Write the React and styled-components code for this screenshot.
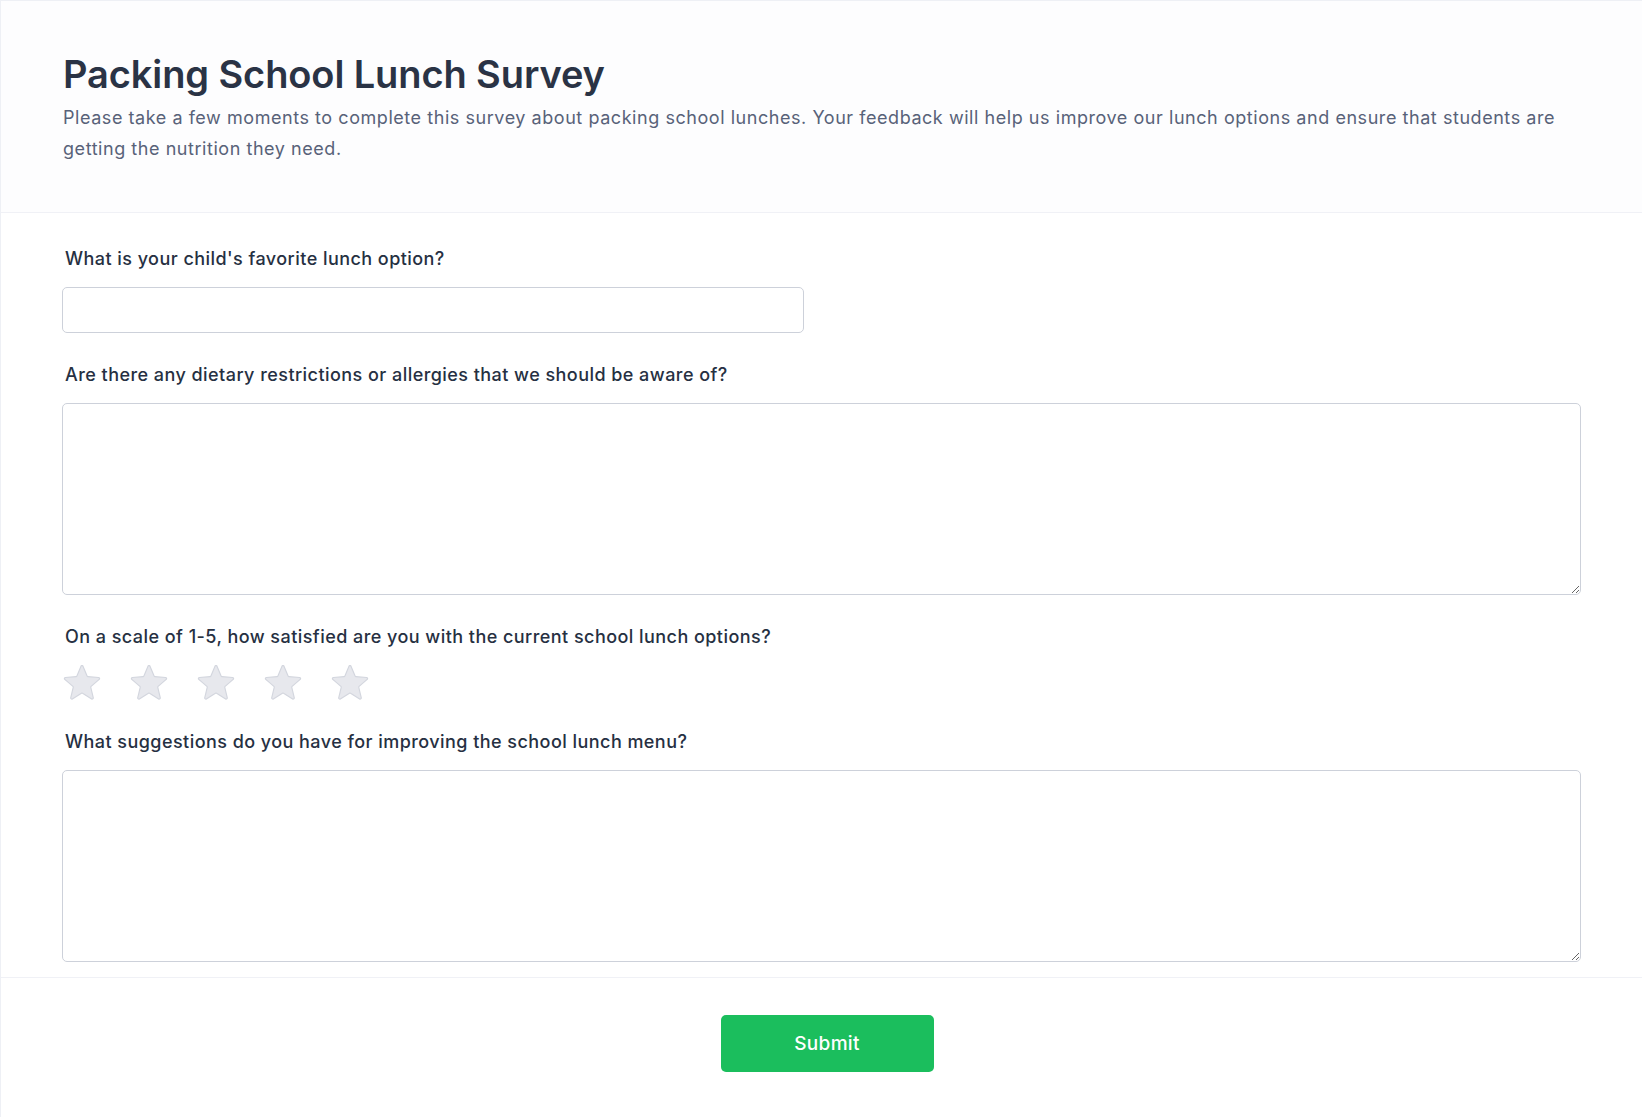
import React, { useState } from "react";
import styled, { createGlobalStyle } from "styled-components";

const GlobalStyle = createGlobalStyle`
  * {
    box-sizing: border-box;
  }
  body {
    margin: 0;
    background: #ffffff;
    font-family: Inter, "Noto Sans", "Liberation Sans", sans-serif;
    -webkit-font-smoothing: antialiased;
  }
`;

const Card = styled.div`
  display: flex;
  flex-direction: column;
  min-height: 1117px;
  background: #ffffff;
  border-left: 1px solid #eef0f5;
  border-top: 1px solid #eef0f5;
`;

const Header = styled.header`
  display: flex;
  flex-direction: column;
  gap: 8px;
  padding: 53px 61px 48px 62px;
  background: #fdfdfe;
  border-bottom: 1px solid #f0f1f6;
`;

const Title = styled.h1`
  margin: 0;
  font-size: 38px;
  line-height: 40px;
  font-weight: 600;
  color: #2a3345;
  letter-spacing: -0.1px;
`;

const Description = styled.p`
  margin: 0;
  font-size: 18px;
  line-height: 31px;
  font-weight: 400;
  letter-spacing: 0.55px;
  color: #586279;
`;

const Form = styled.form`
  display: flex;
  flex-direction: column;
  gap: 28px;
  padding: 32px 61px 15px 61px;
  border-bottom: 1px solid #f0f1f6;
`;

const Field = styled.div`
  display: flex;
  flex-direction: column;
  gap: 14px;
`;

const Label = styled.label`
  padding-left: 3px;
  font-size: 18px;
  line-height: 28px;
  font-weight: 450;
  letter-spacing: 0.45px;
  color: #263042;
`;

const TextInput = styled.input`
  width: 742px;
  height: 46px;
  padding: 0 14px;
  border: 1px solid #cdd1da;
  border-radius: 5px;
  font: inherit;
  font-size: 18px;
  color: #263042;
  outline: none;
`;

const TextArea = styled.textarea`
  width: 100%;
  height: 192px;
  padding: 12px 14px;
  border: 1px solid #cdd1da;
  border-radius: 5px;
  font: inherit;
  font-size: 18px;
  color: #263042;
  outline: none;
`;

const Stars = styled.div`
  display: flex;
  gap: 29px;
  padding-left: 1px;
`;

const StarButton = styled.button`
  display: flex;
  padding: 0;
  border: none;
  background: none;
  cursor: pointer;

  svg path {
    fill: ${(p) => (p.$active ? "#facc15" : "#e7e8ed")};
    stroke: ${(p) => (p.$active ? "#eab308" : "#d3d6de")};
  }
`;

const Footer = styled.footer`
  display: flex;
  justify-content: center;
  padding: 37px 0 45px 11px;
`;

const SubmitButton = styled.button`
  width: 213px;
  height: 57px;
  border: none;
  border-radius: 5px;
  background: #1bbe5d;
  color: #ffffff;
  font-family: inherit;
  font-size: 19px;
  font-weight: 500;
  letter-spacing: 0.3px;
  cursor: pointer;
`;

function Star() {
  return (
    <svg width="38" height="35" viewBox="2.1 2.9 19.8 18.2" strokeWidth="0.6">
      <path d="M11.48 3.499a.562.562 0 0 1 1.04 0l2.125 5.111a.563.563 0 0 0 .475.345l5.518.442c.499.04.701.663.321.988l-4.204 3.602a.563.563 0 0 0-.182.557l1.285 5.385a.562.562 0 0 1-.84.61l-4.725-2.885a.562.562 0 0 0-.586 0L6.982 20.54a.562.562 0 0 1-.84-.61l1.285-5.386a.562.562 0 0 0-.182-.557l-4.204-3.602a.562.562 0 0 1 .321-.988l5.518-.442a.563.563 0 0 0 .475-.345L11.48 3.5Z" />
    </svg>
  );
}

function App() {
  const [rating, setRating] = useState(0);

  return (
    <>
      <GlobalStyle />
      <Card>
        <Header>
          <Title>Packing School Lunch Survey</Title>
          <Description>
            Please take a few moments to complete this survey about packing
            school lunches. Your feedback will help us improve our lunch options
            and ensure that students are getting the nutrition they need.
          </Description>
        </Header>
        <Form onSubmit={(e) => e.preventDefault()}>
          <Field>
            <Label htmlFor="favorite">
              What is your child's favorite lunch option?
            </Label>
            <TextInput id="favorite" type="text" />
          </Field>
          <Field>
            <Label htmlFor="restrictions">
              Are there any dietary restrictions or allergies that we should be
              aware of?
            </Label>
            <TextArea id="restrictions" />
          </Field>
          <Field>
            <Label>
              On a scale of 1-5, how satisfied are you with the current school
              lunch options?
            </Label>
            <Stars>
              {[1, 2, 3, 4, 5].map((n) => (
                <StarButton
                  key={n}
                  type="button"
                  $active={n <= rating}
                  onClick={() => setRating(n)}
                  aria-label={`${n} star`}
                >
                  <Star />
                </StarButton>
              ))}
            </Stars>
          </Field>
          <Field>
            <Label htmlFor="suggestions">
              What suggestions do you have for improving the school lunch menu?
            </Label>
            <TextArea id="suggestions" />
          </Field>
        </Form>
        <Footer>
          <SubmitButton type="submit">Submit</SubmitButton>
        </Footer>
      </Card>
    </>
  );
}

export default App;
